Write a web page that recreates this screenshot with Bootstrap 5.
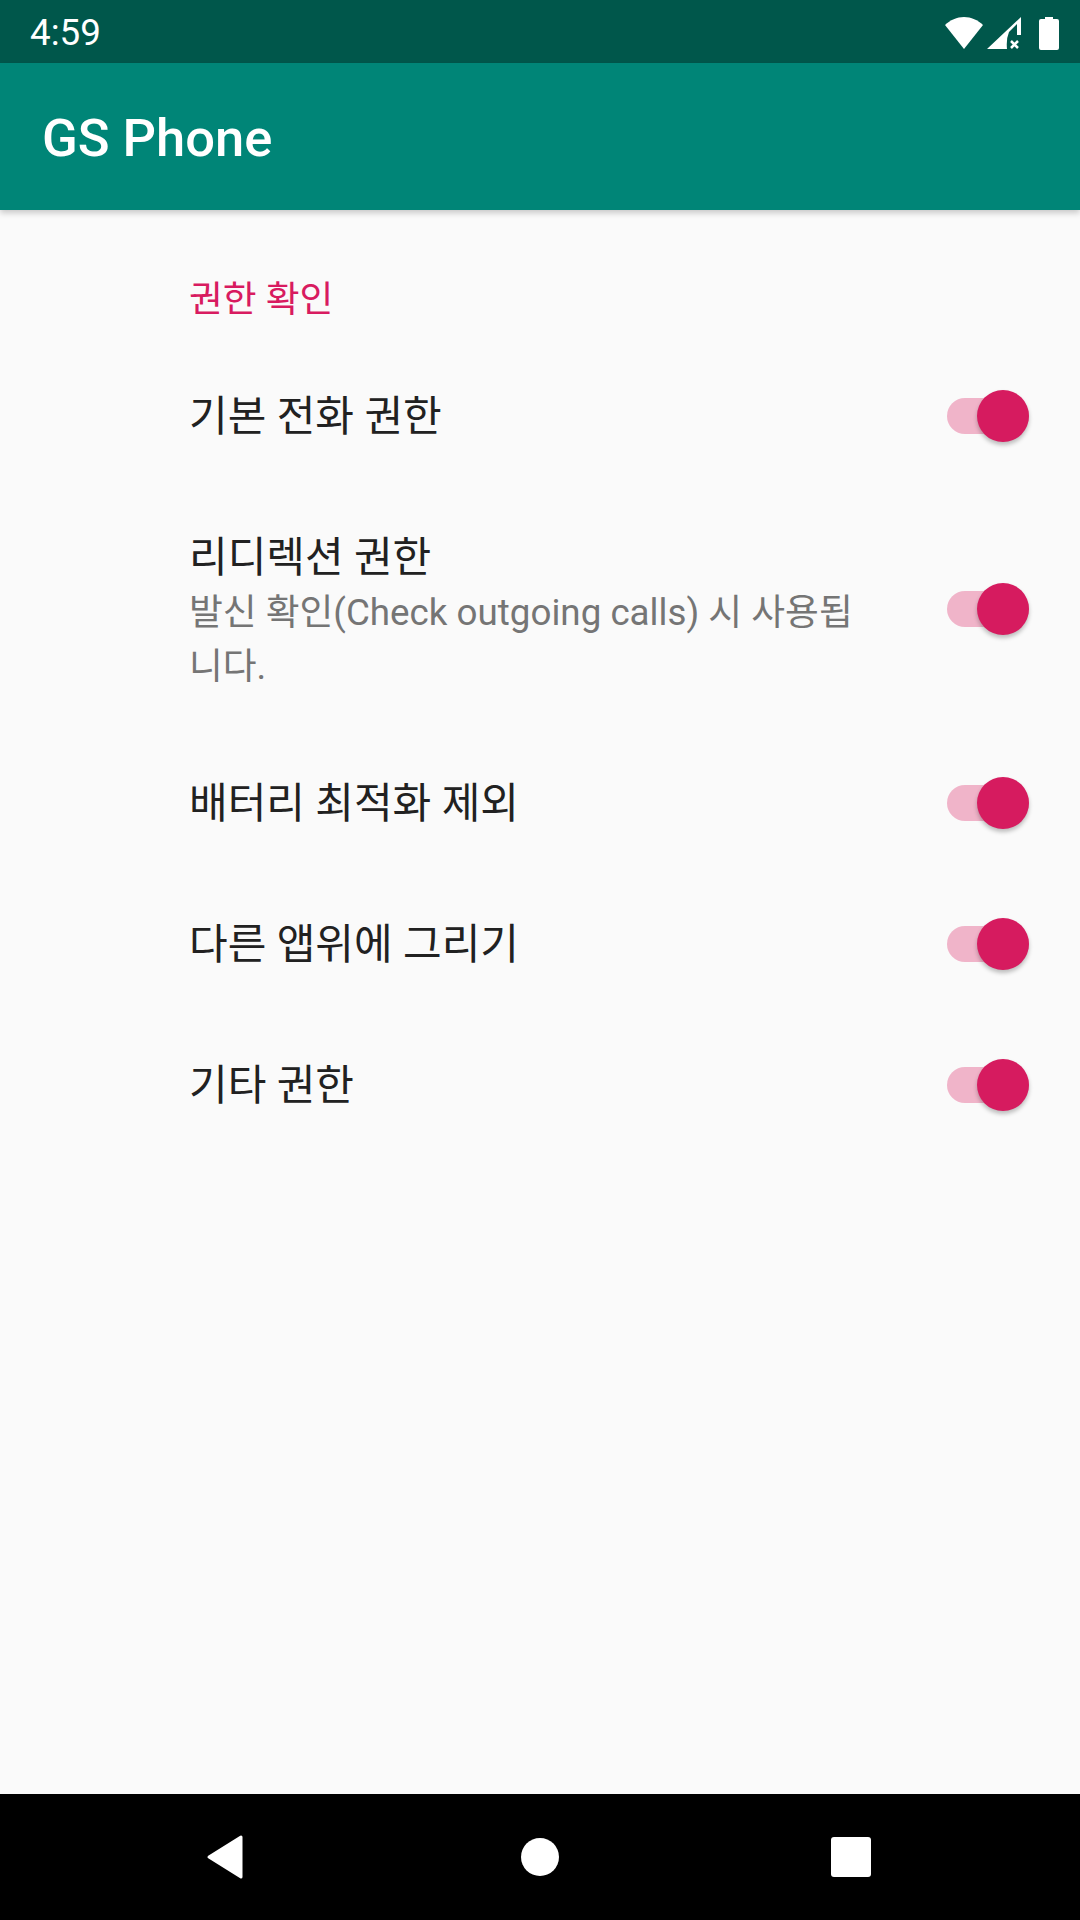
<!doctype html>
<html lang="ko">

<head>
    <meta charset="utf-8">
    <meta name="viewport" content="width=device-width, initial-scale=1">
    <title>GS Phone</title>
    <link href="https://cdn.jsdelivr.net/npm/bootstrap@5.3.1/dist/css/bootstrap.min.css" rel="stylesheet">
    <style>
        body {
            background: #fafafa;
            font-family: Roboto, "Noto Sans CJK KR", sans-serif;
            height: 1920px;
            overflow: hidden;
        }

        .status-bar {
            height: 63px;
            background: #00574b;
            color: #fff;
            font-size: 36.75px;
            padding: 2px 21px 0 30px;
        }

        .status-icons svg {
            display: block;
        }

        .battery-gap {
            margin-left: 18px;
        }

        .app-bar {
            height: 147px;
            background: #008577;
            color: #fff;
            font-size: 52.5px;
            font-weight: 500;
            padding: 4px 0 0 42px;
            box-shadow: 0 3px 6px rgba(0, 0, 0, .2);
        }

        .pref-list {
            padding-left: 189px;
            padding-right: 51px;
        }

        .pref-category {
            height: 71px;
            padding-top: 65px;
            margin-bottom: 0;
            color: #d81b60;
            font-size: 36.75px;
            line-height: 50px;
            box-sizing: content-box;
        }

        .pref-row {
            min-height: 141px;
        }

        .pref-row.two-line {
            min-height: 246px;
        }

        .pref-text {
            padding-top: 4px;
        }

        .pref-title {
            color: #212121;
            font-size: 42px;
            line-height: 56px;
        }

        .pref-summary {
            color: #757575;
            font-size: 36.75px;
            line-height: 54px;
            width: 680px;
        }

        .toggle-track {
            display: block;
            width: 82px;
            height: 36px;
            margin-bottom: 2px;
            border-radius: 18px;
            background: #f0b4c9;
            position: relative;
        }

        .toggle-thumb {
            position: absolute;
            right: 0;
            top: -8px;
            width: 52px;
            height: 52px;
            border-radius: 50%;
            background: #d61b5f;
            box-shadow: 0 3px 4px rgba(0, 0, 0, .25);
        }

        .nav-strip {
            height: 126px;
            background: #000;
        }
    </style>
</head>

<body class="d-flex flex-column">
    <div class="status-bar d-flex align-items-center justify-content-between">
        <span>4:59</span>
        <div class="status-icons d-flex align-items-center">
            <svg width="38" height="32" viewBox="0 0 38 32"><path d="M0 8C5 3 12 0 19 0s14 3 19 8L19 32z" fill="#fff"/></svg>
            <svg width="34" height="32" viewBox="0 0 34 32" class="ms-1"><path d="M0 32 34 0V18H30V7L22 15Q19 22 20 32z" fill="#fff"/><path d="M24 24l7 7m0-7-7 7" stroke="#fff" stroke-width="2.500"/></svg>
            <svg width="20" height="34" viewBox="0 0 20 34" class="battery-gap"><path d="M6 3V1h8v2h4a2 2 0 0 1 2 2v27a2 2 0 0 1-2 2H2a2 2 0 0 1-2-2V5a2 2 0 0 1 2-2z" fill="#fff"/></svg>
        </div>
    </div>
    <div class="app-bar d-flex align-items-center">GS Phone</div>

    <div class="pref-list flex-grow-1">
        <p class="pref-category">권한 확인</p>
        <div class="pref-row d-flex align-items-center justify-content-between">
            <div class="pref-title">기본 전화 권한</div>
            <span class="toggle-track"><span class="toggle-thumb"></span></span>
        </div>
        <div class="pref-row two-line d-flex align-items-center justify-content-between">
            <div class="pref-text">
                <div class="pref-title">리디렉션 권한</div>
                <div class="pref-summary">발신 확인(Check outgoing calls) 시 사용됩니다.</div>
            </div>
            <span class="toggle-track"><span class="toggle-thumb"></span></span>
        </div>
        <div class="pref-row d-flex align-items-center justify-content-between">
            <div class="pref-title">배터리 최적화 제외</div>
            <span class="toggle-track"><span class="toggle-thumb"></span></span>
        </div>
        <div class="pref-row d-flex align-items-center justify-content-between">
            <div class="pref-title">다른 앱위에 그리기</div>
            <span class="toggle-track"><span class="toggle-thumb"></span></span>
        </div>
        <div class="pref-row d-flex align-items-center justify-content-between">
            <div class="pref-title">기타 권한</div>
            <span class="toggle-track"><span class="toggle-thumb"></span></span>
        </div>
    </div>

    <div class="nav-strip">
        <svg width="1080" height="126" viewBox="0 0 1080 126" class="d-block">
            <path d="M209 63 241 43V83z" fill="#fff" stroke="#fff" stroke-width="3" stroke-linejoin="round"/>
            <circle cx="540" cy="63" r="19" fill="#fff"/>
            <rect x="831" y="43" width="40" height="40" rx="3" fill="#fff"/>
        </svg>
    </div>
    <script src="https://cdn.jsdelivr.net/npm/bootstrap@5.3.1/dist/js/bootstrap.bundle.min.js"></script>
</body>

</html>
